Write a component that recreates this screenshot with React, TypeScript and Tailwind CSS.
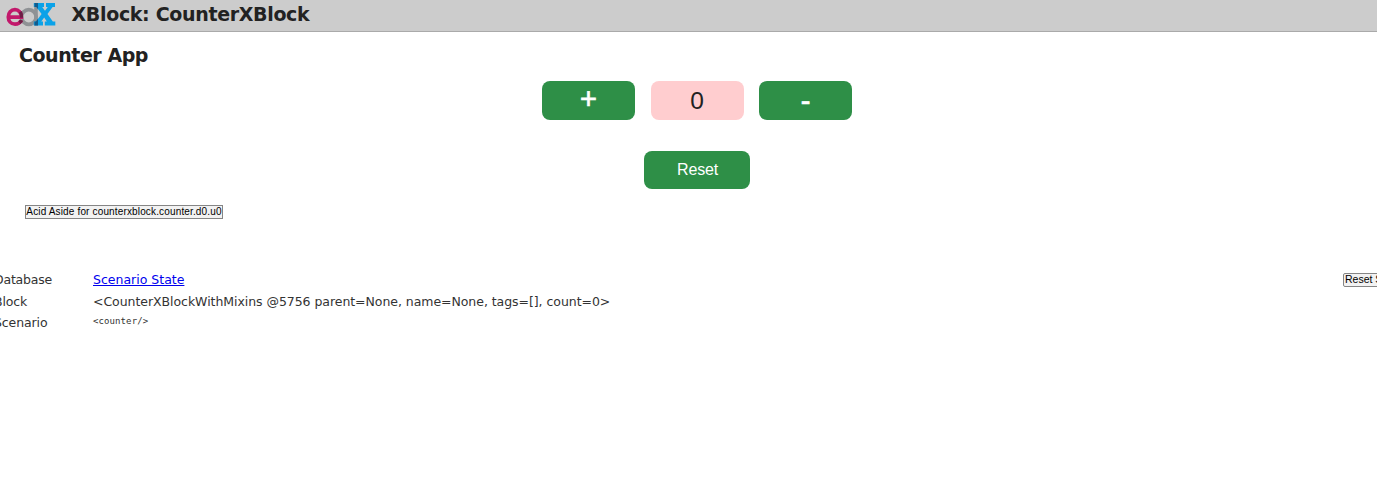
import { useState } from "react";

function EdxLogo() {
  return (
    <svg width="50" height="25" viewBox="0 0 50 25" className="block shrink-0" role="img" aria-label="edX">
      <g fill="none">
        <circle cx="22.8" cy="15" r="7.3" stroke="#8f9295" strokeWidth="3.7" />
        <path d="M30 1.2V23.4" stroke="#8f9295" strokeWidth="3.6" />
        <path d="M3 15.1H15.4C15.4 10.7 12.6 7.7 9 7.7C5 7.7 2.3 10.8 2.3 14.9C2.3 19.1 5 22.2 9 22.2C11.9 22.2 14.2 20.7 15.4 18.4" stroke="#c2186b" strokeWidth="3.7" />
        <path d="M14.4 9.7C15.3 11.2 15.6 13 15.5 15.7M13.4 20.6C14.4 20 15.2 19.2 15.6 18.2" stroke="#6d1f45" strokeWidth="3.2" />
      </g>
      <path
        fill="#0ba2e8"
        d="M27.8 1H38V5H36.2L39 8.8L41.8 5H40V1H49V5H46.6L41.5 12L46.8 19.4H49.3V23.4H38.8V19.4H40.8L38.2 15.5L35.3 19.4H37V23.4H27.8V19.4H30L35.6 12L30.4 5H27.8Z"
      />
      <path fill="#145b8b" d="M28.5 1H32V7.2L30.4 5H28.5ZM28.5 19.4H30L32 16.8V23.4H28.5Z" />
    </svg>
  );
}

export default function App() {
  const [count, setCount] = useState(0);
  const green =
    "rounded-[8px] bg-[#2e8f47] text-white flex items-center justify-center font-['Liberation_Sans',sans-serif]";
  return (
    <div className="h-[477px] w-full overflow-hidden bg-white font-['DejaVu_Sans',sans-serif] text-[#222]">
      <header className="flex h-8 items-start border-b border-[#aaa] bg-[#ccc] pl-1.5 pt-0.5">
        <EdxLogo />
        <h1 className="ml-[15.5px] whitespace-nowrap text-[19px] font-bold leading-[25px] tracking-[-0.33px]">
          XBlock: CounterXBlock
        </h1>
      </header>
      <main>
        <h2 className="pl-[19px] pt-[11px] text-[19px] font-bold leading-6 tracking-[-0.45px]">Counter App</h2>
        <div className="mt-[14px] flex justify-center gap-[15.5px] pl-[17px]">
          <button className={`${green} h-[38.5px] w-[93px] pb-px text-[29px] [-webkit-text-stroke:0.7px_white]`} onClick={() => setCount(count + 1)}>
            +
          </button>
          <span className="flex h-[38.5px] w-[93px] items-center justify-center rounded-[8px] bg-[#ffcdcf] pt-0.5 font-['Liberation_Sans',sans-serif] text-[24.5px]">
            {count}
          </span>
          <button className={`${green} h-[38.5px] w-[93px] pt-0.5 text-[29px] [-webkit-text-stroke:0.7px_white]`} onClick={() => setCount(count - 1)}>
            -
          </button>
        </div>
        <div className="mt-[31px] flex justify-center pl-[17px]">
          <button className={`${green} h-[38.5px] w-[106px] pl-px text-[16px] tracking-[-0.2px]`} onClick={() => setCount(0)}>
            Reset
          </button>
        </div>
        <button className="ml-[25px] mt-4 flex h-[14px] w-[198px] items-center justify-center whitespace-nowrap border border-[#858585] bg-[#f2f2f2] font-['Liberation_Sans',sans-serif] text-[10px] leading-3 tracking-[0.15px] text-black">
          Acid Aside for counterxblock.counter.d0.u0
        </button>
      </main>
      <footer className="mt-[50px] flex items-start justify-between text-[12.5px] text-[#333]">
        <div className="-ml-[6px] grid grid-cols-[99px_auto] whitespace-nowrap">
          <span className="leading-[22px] tracking-[-0.2px]">Database</span>
          <a href="#state" className="leading-[22px] text-[#0000ee] underline">Scenario State</a>
          <span className="leading-[22px] tracking-[-0.15px]">Block</span>
          <span className="leading-[22px] tracking-[-0.05px]">
            {"<CounterXBlockWithMixins @5756 parent=None, name=None, tags=[], count=0>"}
          </span>
          <span className="leading-[19px] tracking-[-0.1px]">Scenario</span>
          <code className="font-['DejaVu_Sans_Mono',monospace] text-[9px] leading-[16px] tracking-[0.1px]">{"<counter/>"}</code>
        </div>
        <button className="-mr-10 mt-[4px] flex h-[14px] w-[74px] items-center whitespace-nowrap rounded-[2px] border border-[#858585] bg-[#f2f2f2] pl-px font-['Liberation_Sans',sans-serif] text-[10.5px] text-black">
          Reset State
        </button>
      </footer>
    </div>
  );
}
